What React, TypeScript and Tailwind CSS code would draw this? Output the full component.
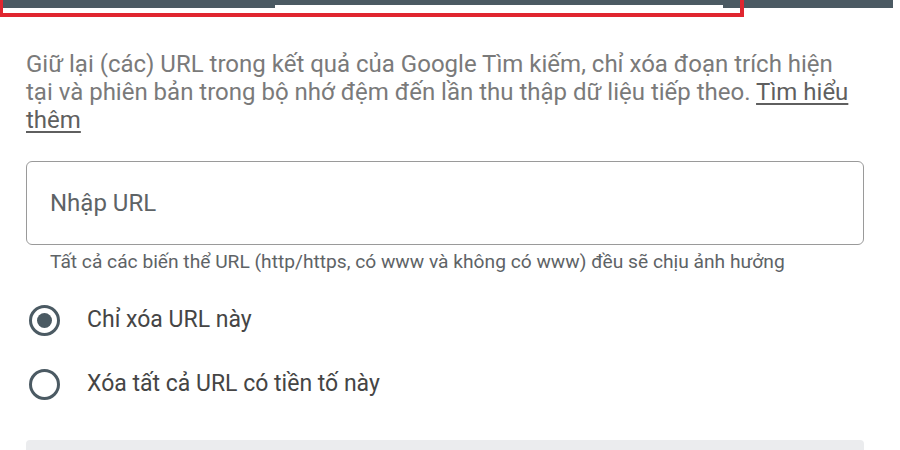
import { useState } from 'react';

const font = { fontFamily: 'Roboto, "Noto Sans", "Liberation Sans", sans-serif' };

function Radio({ checked, label, onClick }: { checked: boolean; label: string; onClick: () => void }) {
  return (
    <button onClick={onClick} className="flex items-center h-[64px] text-left">
      <span className="ml-[29px] w-[31px] h-[31px] rounded-full border-[3px] border-[#4b5a63] flex items-center justify-center">
        {checked && <span className="w-[15px] h-[15px] rounded-full bg-[#4b5a63]" />}
      </span>
      <span className="ml-[27px] text-[23px] text-[#454545]">{label}</span>
    </button>
  );
}

export default function App() {
  const [mode, setMode] = useState<'url' | 'prefix'>('url');

  return (
    <div className="w-[900px] h-[450px] overflow-hidden bg-white relative" style={font}>
      {/* tab strip */}
      <div className="flex h-[9px]">
        <div className="w-[275px] h-[8px] bg-[#4b5a63]" />
        <div className="w-[448px] h-[5px] bg-[#4b5a63]" />
        <div className="w-[170px] h-[8px] bg-[#4b5a63]" />
      </div>
      {/* highlight frame around the tab */}
      <div className="absolute left-0 top-0 w-[744px] h-[17px] border-l-[3px] border-r-[4px] border-b-[4px] border-[#e0262f]" />

      <div className="px-[26px] pt-[41px]">
        <p className="text-[24px] leading-[28px] text-[#7a7a7a] w-[834px]">
          Giữ lại (các) URL trong kết quả của Google Tìm kiếm, chỉ xóa đoạn trích hiện tại và phiên bản trong bộ nhớ
          đệm đến lần thu thập dữ liệu tiếp theo.{' '}
          <a className="underline underline-offset-[3px] text-[#5f5f5f]">Tìm hiểu thêm</a>
        </p>

        <div className="mt-[27px] w-[838px] h-[84px] rounded-[6px] border border-[#9a9a9a] flex items-center pl-[23px]">
          <input
            placeholder="Nhập URL"
            className="w-full outline-none text-[24px] placeholder:text-[#5e6366] text-[#333]"
            style={font}
          />
        </div>
        <div className="mt-[6px] pl-[24px] text-[19.2px] leading-[22px] text-[#5e6366]">
          Tất cả các biến thể URL (http/https, có www và không có www) đều sẽ chịu ảnh hưởng
        </div>
      </div>

      <div className="mt-[15px] flex flex-col">
        <Radio checked={mode === 'url'} label="Chỉ xóa URL này" onClick={() => setMode('url')} />
        <Radio checked={mode === 'prefix'} label="Xóa tất cả URL có tiền tố này" onClick={() => setMode('prefix')} />
      </div>

      <div className="absolute left-[26px] top-[440px] w-[838px] h-[20px] rounded-t-[4px] bg-[#ebecee]" />
    </div>
  );
}
